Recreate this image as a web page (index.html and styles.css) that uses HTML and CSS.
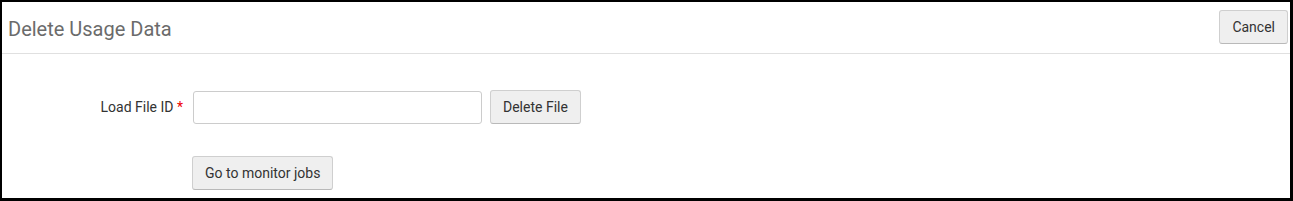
FILE: index.html
```html
<!DOCTYPE html>
<html lang="en">
<head>
    <meta charset="UTF-8">
    <title>Delete Usage Data</title>
    <link rel="stylesheet" href="styles.css">
</head>
<body>
    <div class="frame">
        <div class="page-header">
            <h1>Delete Usage Data</h1>
            <button class="btn btn-cancel">Cancel</button>
        </div>

        <div class="form">
            <div class="form-row">
                <label class="form-label" for="loadFileId">Load File ID <span class="required">*</span></label>
                <input class="form-input" id="loadFileId" type="text">
                <button class="btn btn-delete">Delete File</button>
            </div>
            <div class="form-row form-row-actions">
                <button class="btn">Go to monitor jobs</button>
            </div>
        </div>
    </div>
</body>
</html>
```

FILE: styles.css
```css
html, body {
    margin: 0;
    padding: 0;
    background-color: #000;
}

body {
    font-family: Roboto, "Liberation Sans", Arial, sans-serif;
    width: 1293px;
    height: 201px;
    overflow: hidden;
}

.frame {
    box-sizing: border-box;
    margin: 2px 3px 0 2px;
    height: 196px;
    background-color: #fff;
}

.page-header {
    display: flex;
    justify-content: space-between;
    align-items: flex-start;
    height: 52px;
    border-bottom: 1px solid #e0e0e0;
    padding: 8px 2px 0 6px;
    box-sizing: border-box;
}

.page-header h1 {
    margin: 7px 0 0 0;
    font-size: 20px;
    font-weight: normal;
    color: #6b6b6b;
}

.btn {
    font-family: inherit;
    font-size: 14px;
    color: #333;
    background-color: #efefef;
    border: 1px solid #cfcfcf;
    border-bottom-color: #b9b9b9;
    border-radius: 3px;
    height: 34px;
    padding: 0 12px;
    cursor: pointer;
}

.btn:hover {
    background-color: #e4e4e4;
}

.btn-cancel {
    padding: 0 12px;
}

.form {
    padding-top: 36px;
}

.form-row {
    display: flex;
    align-items: center;
}

.form-label {
    width: 181px;
    text-align: right;
    font-size: 14px;
    color: #333;
    margin-right: 10px;
}

.required {
    color: #e00;
}

.form-input {
    box-sizing: border-box;
    width: 289px;
    height: 33px;
    border: 1px solid #ccc;
    border-radius: 3px;
    margin: 0 8px 0 0;
    font-family: inherit;
    font-size: 14px;
}

.form-row-actions {
    margin-top: 32px;
    padding-left: 190px;
}
```
